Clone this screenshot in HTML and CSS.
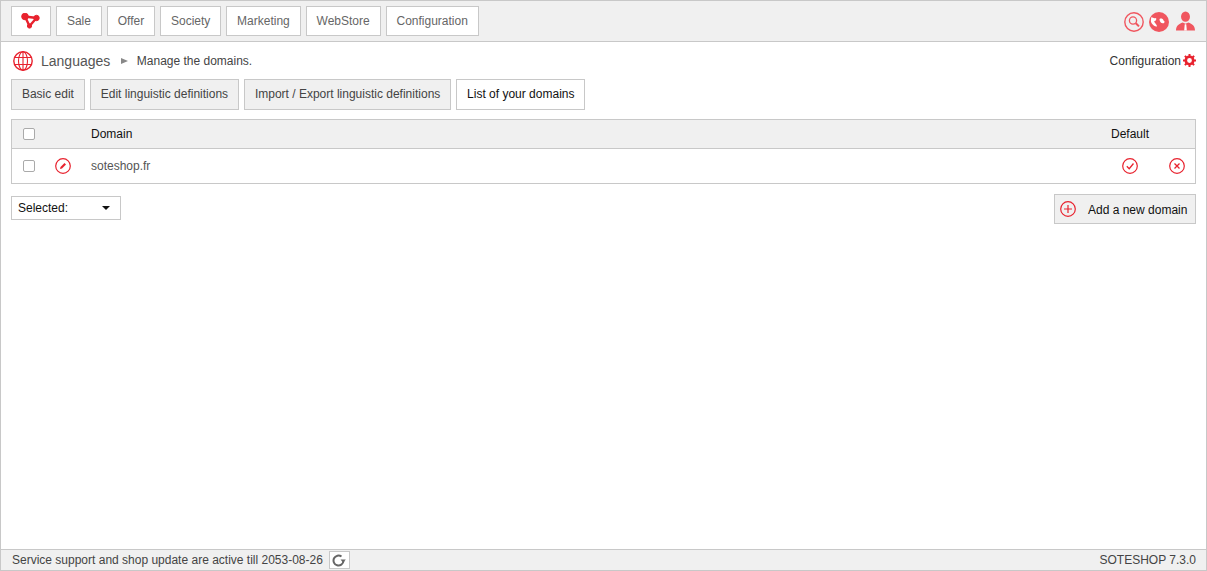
FILE: index.html
```html
<!DOCTYPE html>
<html lang="en">
<head>
<meta charset="utf-8">
<title>Languages</title>
<link rel="stylesheet" href="styles.css">
</head>
<body>
<div class="app">
  <header class="topbar">
    <nav class="menu">
      <a class="menu-btn logo">
        <svg width="20" height="16" viewBox="0 0 20 16"><g fill="#e8222e" stroke="#e8222e"><path d="M4 3.500 L15.500 5 L8.500 13 Z" fill="none" stroke-width="2.400"/><circle cx="4" cy="3.500" r="3.300"/><circle cx="15.500" cy="5" r="2.700"/><circle cx="8.500" cy="13" r="2.100"/></g></svg>
      </a>
      <a class="menu-btn">Sale</a>
      <a class="menu-btn">Offer</a>
      <a class="menu-btn">Society</a>
      <a class="menu-btn">Marketing</a>
      <a class="menu-btn">WebStore</a>
      <a class="menu-btn">Configuration</a>
    </nav>
    <div class="top-icons">
      <svg width="20" height="20" viewBox="0 0 20 20"><g fill="none" stroke="#f0565f"><circle cx="10" cy="10" r="9.200" stroke-width="1.400"/><circle cx="9" cy="8.500" r="3.600" stroke-width="1.300"/><path d="M11.800 11.200 L15 14.400" stroke-width="2"/></g></svg>
      <svg width="20" height="20" viewBox="0 0 20 20"><circle cx="10" cy="10" r="10" fill="#f0565f"/><path d="M2.500 5 C4 6 5 6.500 7 6 C8 7.500 6.500 9 5 9.500 C6 11.500 8 12.500 8 14.500 C6.500 15 3 13 2 10 C1.800 8 2 6 2.500 5 Z M10.500 7 C12 6 14 6.500 14.500 8.500 C15.500 9 16 10 15 11 C14 12 13.500 10.500 12.500 11 C11.500 10.500 10.500 9 10.500 7 Z" fill="#fff"/></svg>
      <svg class="user-icon" width="19" height="20" viewBox="0 0 20 20"><ellipse cx="10" cy="5.500" rx="4.700" ry="5.400" fill="#f0565f"/><path d="M0 20 C0 15 3 13 7 11.500 L10 13 L13 11.500 C17 13 20 15 20 20 Z" fill="#f0565f"/><path d="M9.200 13.500 H10.800 L11.400 20 H8.600 Z" fill="#fff"/></svg>
    </div>
  </header>

  <main class="content">
    <div class="crumbs">
      <div class="crumb-left">
        <svg class="globe" width="20" height="20" viewBox="0 0 20 20"><g fill="none" stroke="#e8222e" stroke-width="1.100"><circle cx="10" cy="10" r="9.200" stroke-width="1.400"/><ellipse cx="10" cy="10" rx="4.500" ry="9.200"/><path d="M10 .8 V19.200 M1.500 6.500 H18.500 M1.500 13.500 H18.500"/></g></svg>
        <span class="crumb-title">Languages</span>
        <span class="crumb-arrow"></span>
        <span class="crumb-sub">Manage the domains.</span>
      </div>
      <div class="crumb-right">
        <span>Configuration</span>
        <svg width="13" height="13" viewBox="0 0 13 13"><circle cx="6.500" cy="6.500" r="3.700" fill="none" stroke="#e8222e" stroke-width="2.600"/><path d="M6.500 0 V13 M0 6.500 H13 M1.900 1.900 L11.100 11.100 M11.100 1.900 L1.900 11.100" stroke="#e8222e" stroke-width="2" stroke-dasharray="2.200 8.600 2.200"/></svg>
      </div>
    </div>

    <div class="tabs">
      <a class="tab">Basic edit</a>
      <a class="tab">Edit linguistic definitions</a>
      <a class="tab">Import / Export linguistic definitions</a>
      <a class="tab active">List of your domains</a>
    </div>

    <div class="table">
      <div class="row head">
        <div class="c-check"><span class="checkbox"></span></div>
        <div class="c-edit"></div>
        <div class="c-name">Domain</div>
        <div class="c-default">Default</div>
        <div class="c-del"></div>
      </div>
      <div class="row body">
        <div class="c-check"><span class="checkbox"></span></div>
        <div class="c-edit">
          <svg width="16" height="16" viewBox="0 0 16 16"><circle cx="8" cy="8" r="7.300" fill="none" stroke="#e8222e" stroke-width="1.200"/><path d="M5 11 L5.500 9 L9.500 5 L11 6.500 L7 10.500 Z" fill="#e8222e"/></svg>
        </div>
        <div class="c-name">soteshop.fr</div>
        <div class="c-default">
          <svg width="16" height="16" viewBox="0 0 16 16"><g fill="none" stroke="#e8222e"><circle cx="8" cy="8" r="7.300" stroke-width="1.200"/><path d="M4.800 8.300 L7.200 10.700 L11.500 5.500" stroke-width="1.300"/></g></svg>
        </div>
        <div class="c-del">
          <svg width="16" height="16" viewBox="0 0 16 16"><g fill="none" stroke="#e8222e"><circle cx="8" cy="8" r="7.300" stroke-width="1.200"/><path d="M5.500 5.500 L10.500 10.500 M10.500 5.500 L5.500 10.500" stroke-width="1.300"/></g></svg>
        </div>
      </div>
    </div>

    <div class="actions">
      <div class="select">
        <span>Selected:</span>
        <span class="caret"></span>
      </div>
      <a class="add-btn">
        <svg width="16" height="16" viewBox="0 0 16 16"><g fill="none" stroke="#e8222e" stroke-width="1.200"><circle cx="8" cy="8" r="7.300"/><path d="M8 4 V12 M4 8 H12"/></g></svg>
        <span class="add-label">Add a new domain</span>
      </a>
    </div>
  </main>

  <footer class="statusbar">
    <div class="status-left">
      <span>Service support and shop update are active till 2053-08-26</span>
      <a class="refresh">
        <svg width="14" height="13" viewBox="0 0 14 13"><path d="M9.500 2.500 A5 5 0 1 0 11.500 7" fill="none" stroke="#666" stroke-width="2"/><path d="M8.500 5.500 H13.800 L11.200 8.800 Z" fill="#666"/></svg>
      </a>
    </div>
    <span class="version">SOTESHOP 7.3.0</span>
  </footer>
</div>
</body>
</html>
```
FILE: styles.css
```css
* { box-sizing: border-box; }
html, body { margin: 0; height: 100%; }
body {
  font-family: "Liberation Sans", Arial, sans-serif;
  font-size: 12px;
  color: #444;
  background: #fff;
  overflow: hidden;
}
.app {
  height: 571px;
  display: flex;
  flex-direction: column;
  border: 1px solid #c8c8c8;
}
.topbar {
  height: 41px;
  flex: none;
  display: flex;
  align-items: flex-start;
  justify-content: space-between;
  background: #f0f0f0;
  border-bottom: 1px solid #c8c8c8;
  padding: 5px 11px 5px 10px;
}
.menu { display: flex; gap: 5px; }
.menu-btn {
  height: 30px;
  display: flex;
  align-items: center;
  padding: 0 9.900px;
  background: #fff;
  border: 1px solid #c8c8c8;
  color: #666;
}
.menu-btn.logo { width: 40px; justify-content: center; padding: 0; }
.top-icons { display: flex; gap: 5px; padding-top: 6px; }
.user-icon { margin: -1px 0 0 2px; }
.content { flex: 1; padding: 0 10px; }
.crumbs {
  height: 37px;
  display: flex;
  align-items: center;
  justify-content: space-between;
}
.crumb-left { display: flex; align-items: center; padding-left: 2px; }
.crumb-title { font-size: 14px; margin-left: 8px; color: #555; }
.crumb-arrow {
  width: 0; height: 0;
  margin: 1px 9px 0 10.500px;
  border-left: 7px solid #888;
  border-top: 3.500px solid transparent;
  border-bottom: 3.500px solid transparent;
}
.crumb-sub { color: #444; }
.crumb-right { display: flex; align-items: center; gap: 2px; color: #333; }
.tabs { display: flex; gap: 5px; }
.tab {
  height: 31px;
  display: flex;
  align-items: center;
  padding: 0 9.900px 2px;
  background: #f0f0f0;
  border: 1px solid #c8c8c8;
  color: #444;
}
.tab.active { background: #fff; color: #111; }
.table { margin-top: 9px; border: 1px solid #c8c8c8; }
.row { display: flex; align-items: center; }
.row.head {
  height: 29px;
  background: #f0f0f0;
  border-bottom: 1px solid #c8c8c8;
  color: #111;
}
.row.body { height: 34px; color: #555; }
.c-check { width: 35px; padding-left: 11px; display: flex; }
.c-edit { width: 44px; padding-left: 8px; display: flex; }
.c-name { flex: 1; }
.c-default { width: 54px; display: flex; justify-content: center; }
.c-del { width: 38px; padding-left: 12px; display: flex; }
.checkbox {
  width: 12px; height: 12px;
  display: block;
  background: #fff;
  border: 1px solid #aaa;
  border-radius: 2px;
}
.actions {
  margin-top: 10px;
  display: flex;
  justify-content: space-between;
  align-items: flex-start;
}
.select {
  margin-top: 2px;
  width: 110px; height: 24px;
  display: flex;
  align-items: center;
  justify-content: space-between;
  padding: 0 10px 0 6px;
  background: #fff;
  border: 1px solid #c8c8c8;
  color: #111;
}
.caret {
  width: 0; height: 0;
  border-top: 4px solid #111;
  border-left: 4.500px solid transparent;
  border-right: 4.500px solid transparent;
}
.add-btn {
  width: 142px; height: 30px;
  display: flex;
  align-items: center;
  padding: 0 0 0 5px;
  gap: 12px;
  background: #f0f0f0;
  border: 1px solid #c8c8c8;
  color: #111;
}
.add-label { white-space: nowrap; padding-top: 1px; }
.statusbar {
  height: 21px;
  flex: none;
  display: flex;
  align-items: center;
  justify-content: space-between;
  padding: 0 10px 0 11px;
  background: #f0f0f0;
  border-top: 1px solid #c8c8c8;
  color: #444;
}
.status-left { display: flex; align-items: center; gap: 6px; }
.refresh {
  width: 21px; height: 18px;
  display: flex;
  align-items: center;
  justify-content: center;
  background: #fff;
  border: 1px solid #c8c8c8;
}
```
